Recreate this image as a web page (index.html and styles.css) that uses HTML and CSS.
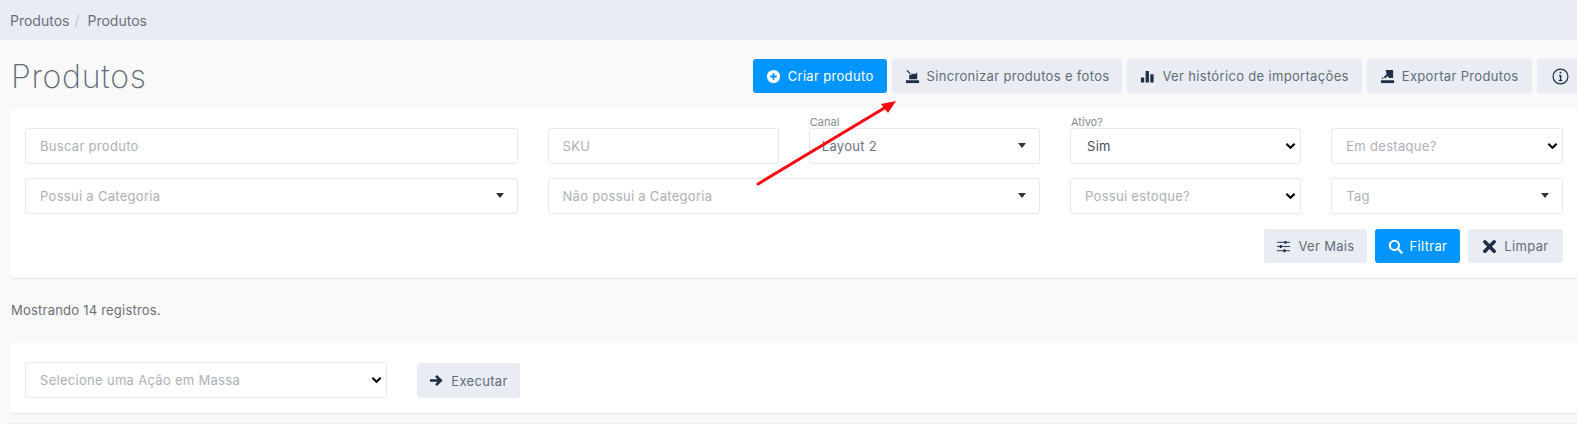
FILE: index.html
```html
<!DOCTYPE html>
<html lang="pt-BR">
<head>
  <meta charset="UTF-8">
  <meta name="viewport" content="width=device-width, initial-scale=1.0">
  <title>Produtos</title>
  <link rel="stylesheet" href="styles.css">
</head>
<body>
  <div class="breadcrumb">
    <span>Produtos</span>
    <span class="breadcrumb-sep">/</span>
    <span>Produtos</span>
  </div>

  <div class="page">
    <div class="page-header">
      <h1>Produtos</h1>
      <div class="actions">
        <button class="btn btn-primary">
          <svg class="icon" viewBox="0 0 16 16"><path fill="#fff" fill-rule="evenodd" d="M8 1a7 7 0 1 0 0 14A7 7 0 0 0 8 1zM7 4.500h2V7h2.500v2H9v2.500H7V9H4.500V7H7z"/></svg>
          Criar produto
        </button>
        <button class="btn">
          <svg class="icon" viewBox="0 0 16 16"><path fill="#1d2f45" d="M1 12h14v3H1z"/><path fill="#1d2f45" d="M4.500 11V6h2.500V4.500l2 1 1-1 1 1 2-2V11z"/><path fill="none" stroke="#1d2f45" stroke-width="1.300" d="M2 1.500l3.500 3.500"/></svg>
          Sincronizar produtos e fotos
        </button>
        <button class="btn">
          <svg class="icon" viewBox="0 0 16 16"><path fill="#1d2f45" d="M1 9h3.500v5.500H1zM6 2h3.500v12.500H6zM11 5.500h3.500v9H11z"/></svg>
          Ver histórico de importações
        </button>
        <button class="btn">
          <svg class="icon" viewBox="0 0 16 16"><path fill="#1d2f45" d="M1 12h14v3H1z"/><path fill="#1d2f45" d="M6 1h8v8.500H9.500L8 7.500 5.500 10 4 8.500 7 5.500z"/><path fill="#1d2f45" d="M2 9h1.500v1.500H2z"/></svg>
          Exportar Produtos
        </button>
        <button class="btn btn-info">
          <svg class="icon icon-lg" viewBox="0 0 16 16"><circle cx="8" cy="8" r="7" fill="none" stroke="#1d2f45" stroke-width="1.100"/><path fill="#1d2f45" d="M7.200 3.600h1.600v1.600H7.200zM6.600 6.700h2.200v4.700h.8v1H6.400v-1h1V7.700h-.8z"/></svg>
        </button>
      </div>
    </div>

    <div class="card filters">
      <div class="filter-grid">
        <input class="field span-2" type="text" placeholder="Buscar produto">
        <input class="field" type="text" placeholder="SKU">
        <div class="field-wrap">
          <label class="field-label">Canal</label>
          <div class="field combo combo-value">Layout 2</div>
        </div>
        <div class="field-wrap">
          <label class="field-label">Ativo?</label>
          <select class="field select select-value"><option>Sim</option></select>
        </div>
        <select class="field select"><option>Em destaque?</option></select>

        <div class="field combo span-2">Possui a Categoria</div>
        <div class="field combo span-2">Não possui a Categoria</div>
        <select class="field select"><option>Possui estoque?</option></select>
        <div class="field combo">Tag</div>
      </div>

      <div class="filter-actions">
        <button class="btn btn-more">
          <svg class="icon" viewBox="0 0 16 16"><path fill="none" stroke="#1d2f45" stroke-width="1" d="M1 3.500h14M1 8h14M1 12.500h14"/><path fill="#1d2f45" d="M9 2h2.200v3H9zM4 6.500h2.200v3H4zM8 11h2.200v3H8z"/></svg>
          Ver Mais
        </button>
        <button class="btn btn-primary">
          <svg class="icon" viewBox="0 0 16 16"><circle cx="6.800" cy="6.800" r="4.900" fill="none" stroke="#fff" stroke-width="2.200"/><path stroke="#fff" stroke-width="2.400" stroke-linecap="round" d="M10.700 10.700l3.800 3.800"/></svg>
          Filtrar
        </button>
        <button class="btn btn-clear">
          <svg class="icon" viewBox="0 0 16 16"><path stroke="#1d2f45" stroke-width="3.800" stroke-linecap="round" d="M3 3l10 10M13 3L3 13"/></svg>
          Limpar
        </button>
      </div>
    </div>

    <p class="summary">Mostrando 14 registros.</p>

    <div class="card bulk">
      <select class="field select bulk-select"><option>Selecione uma Ação em Massa</option></select>
      <button class="btn btn-run">
        <svg class="icon" viewBox="0 0 16 16"><path fill="none" stroke="#1d2f45" stroke-width="2.800" d="M1 8h11M7.500 3l5 5-5 5"/></svg>
        Executar
      </button>
    </div>

    <div class="card-next"></div>
  </div>

  <!-- seta vermelha da anotacao -->
  <svg class="annotation" viewBox="0 0 1577 424">
    <path d="M758 184L886 107" stroke="#f5090f" stroke-width="3" stroke-linecap="round"/>
    <path d="M896 101L888 113 881 104z" fill="#f5090f"/>
  </svg>
</body>
</html>
```

FILE: styles.css
```css
html, body {
  height: 100%;
}
body {
  margin: 0;
  padding: 0;
  overflow: hidden;
  font-family: 'Inter', 'Noto Sans', sans-serif;
  font-size: 13px;
  background-color: #f9f9f9;
  color: #6b7280;
}
.breadcrumb {
  display: flex;
  align-items: center;
  height: 40px;
  padding-left: 10px;
  background-color: #e9ecf4;
  color: #6b7078;
  font-size: 14px;
}
.breadcrumb-sep {
  margin: 0 8px 0 5px;
  color: #c0c4cc;
}
.page {
  padding-left: 10px;
  margin-right: -0.5px;
}
.page-header {
  display: flex;
  align-items: flex-start;
  justify-content: space-between;
  height: 50px;
  padding-top: 19px;
}
h1 {
  margin: 0 0 0 1px;
  font-size: 32px;
  font-weight: 200;
  line-height: 36px;
  letter-spacing: 0.7px;
  color: #5f6a78;
}
.actions {
  display: flex;
  gap: 5px;
  margin-right: -6px;
}
.btn {
  display: inline-flex;
  align-items: center;
  justify-content: center;
  gap: 7px;
  height: 34px;
  padding: 0 13px;
  border: none;
  border-radius: 3px;
  background-color: #e9ecf3;
  color: #626c79;
  font-family: inherit;
  font-size: 13px;
  letter-spacing: 0.33px;
  white-space: nowrap;
}
.btn-primary {
  background-color: #0095ff;
  color: #fff;
}
.btn-info {
  width: 47px;
  padding: 0;
}
.btn-more {
  padding: 0 12px;
}
.btn-clear {
  padding: 0 14px;
}
.icon {
  width: 15px;
  height: 15px;
  flex: none;
}
.icon-lg {
  width: 17px;
  height: 17px;
}
.card {
  background-color: #fff;
  border-radius: 4px;
  box-shadow: 0 1px 1px rgba(0, 0, 0, 0.08);
}
.filters {
  height: 169px;
  padding: 19px 15px 0;
  box-sizing: border-box;
}
.filter-grid {
  display: grid;
  grid-template-columns: repeat(6, 1fr);
  gap: 14px 30px;
}
.span-2 {
  grid-column: span 2;
}
.field {
  display: block;
  width: 100%;
  height: 36px;
  padding: 0 14px;
  box-sizing: border-box;
  border: 1px solid #e8e8ea;
  border-radius: 3px;
  background-color: #fff;
  color: #adb1b7;
  font-family: inherit;
  font-size: 13px;
  letter-spacing: 0.3px;
  line-height: 34px;
  outline: none;
}
.field::placeholder {
  color: #adb1b7;
}
/* select nativo com a seta desenhada, para a seta ficar preta com texto cinza */
.select {
  padding-left: 14px;
  appearance: none;
  background-image: url("data:image/svg+xml,%3Csvg xmlns='http://www.w3.org/2000/svg' viewBox='0 0 12 8'%3E%3Cpath d='M1.500 1.500L6 6l4.500-4.500' fill='none' stroke='%23000' stroke-width='2.200'/%3E%3C/svg%3E");
  background-repeat: no-repeat;
  background-position: right 4px center;
  background-size: 11px 8px;
}
.select-value {
  padding-left: 16px;
  color: #495057;
}
.field-wrap {
  position: relative;
}
.field-label {
  position: absolute;
  top: -12px;
  left: 1px;
  font-size: 11px;
  line-height: 13px;
  color: #868c94;
}
.combo {
  position: relative;
}
.combo::after {
  content: "";
  position: absolute;
  top: 14px;
  right: 13px;
  border-top: 5px solid #333;
  border-left: 4px solid transparent;
  border-right: 4px solid transparent;
}
.combo-value {
  padding-left: 12px;
  color: #6b7280;
}
.filter-actions {
  display: flex;
  justify-content: flex-end;
  gap: 8px;
  margin-top: 15px;
}
.summary {
  margin: 0;
  padding: 24px 0 24px 1px;
  height: 17px;
  line-height: 17px;
  letter-spacing: 0.22px;
  color: #6b7078;
}
.bulk {
  display: flex;
  align-items: flex-start;
  gap: 30px;
  height: 70px;
  padding: 19px 15px 0;
  box-sizing: border-box;
}
.bulk-select {
  width: 362px;
}
.btn-run {
  margin-top: 1px;
  width: 103px;
  height: 35px;
}
.card-next {
  height: 1px;
  margin-top: 10px;
  background-color: #ececec;
}
.annotation {
  position: absolute;
  top: 0;
  left: 0;
  width: 1577px;
  height: 424px;
  pointer-events: none;
}
```
